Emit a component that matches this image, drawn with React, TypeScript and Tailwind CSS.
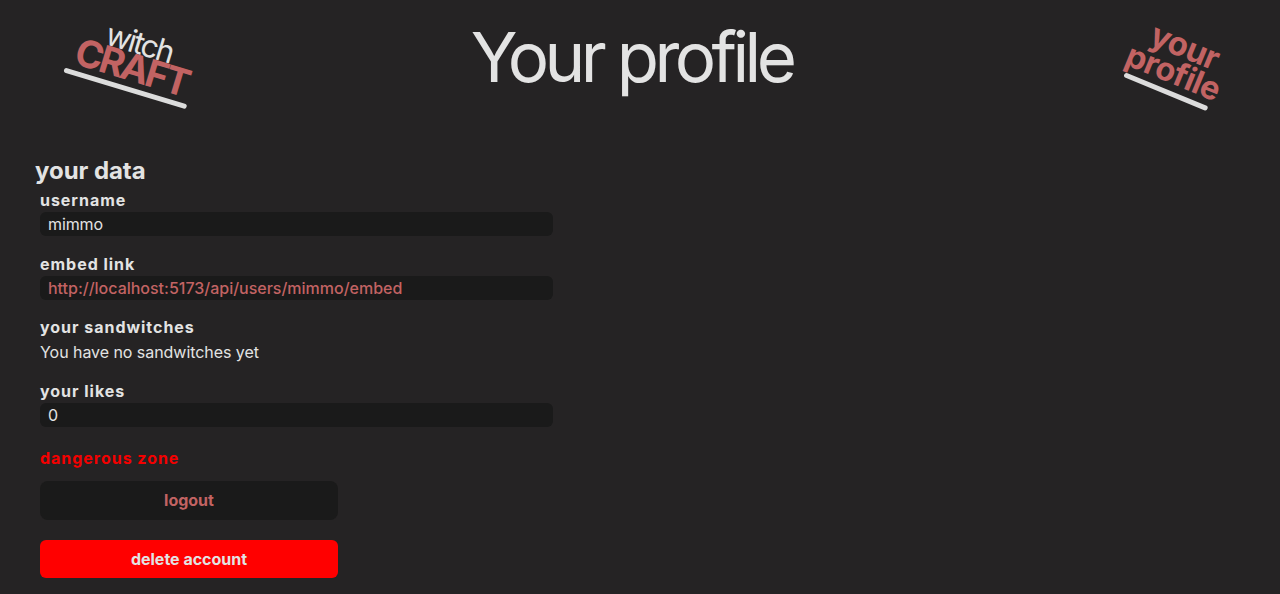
import type { ReactNode } from "react";

function Field({ label, children }: { label: string; children: ReactNode }) {
  return (
    <>
      <h3 className="h-6 text-[16px] leading-6 font-bold tracking-[0.97px]">{label}</h3>
      {children}
    </>
  );
}

export default function App() {
  return (
    <div className="min-h-[594px] overflow-hidden bg-[#252324] font-['Inter',sans-serif] text-[#e3e3e3]">
      <header className="grid h-[150px] grid-cols-[1fr_auto_1fr] items-start pt-[27px] pr-[52px] pl-[68px]">
        <a className="-mt-1 flex h-20 w-[130px] rotate-[16.8deg] flex-col items-center">
          <span className="h-[25px] pt-[3px] pl-[1px] text-[31px] leading-[32px] tracking-[-2.1px]">witch</span>
          <span className="h-[34px] text-[38px] leading-[38px] font-bold tracking-[-2.7px] text-[#c26363]">CRAFT</span>
          <span className="mt-[5px] h-[5px] w-[128px] rounded-full bg-[#dcdcdc]" />
        </a>
        <h1 className="-mt-[12px] -ml-[33px] text-[69px] leading-[84px] font-normal tracking-[-4.6px]">Your profile</h1>
        <a className="flex h-20 w-[105px] rotate-[22.4deg] flex-col items-center justify-self-end">
          <span className="h-[26px] pt-[2px] pl-[2px] text-[33px] leading-[30px] font-bold tracking-[-0.6px] text-[#c26363]">your</span>
          <span className="h-[34px] pt-[5px] text-[32.5px] leading-[30px] font-bold tracking-[-0.6px] text-[#c26363]">profile</span>
          <span className="mt-1 h-[5px] w-[90px] rounded-full bg-[#dcdcdc]" />
        </a>
      </header>
      <main className="px-10">
        <h2 className="-ml-[5px] pt-[3px] text-[24px] leading-[35px] font-bold tracking-[-0.05px]">your data</h2>
        <section className="w-[513px] text-[16px]">
          <Field label="username">
            <p className="mb-[15.6px] h-6 rounded-md bg-[#1a1a1a] px-2 leading-[24px] tracking-[-0.1px]">mimmo</p>
          </Field>
          <Field label="embed link">
            <p className="mb-[15.6px] h-6 rounded-md bg-[#1a1a1a] px-2 leading-6 font-medium tracking-[-0.01px] text-[#c26363]">http://localhost:5173/api/users/mimmo/embed</p>
          </Field>
          <Field label="your sandwitches">
            <p className="mb-[15.6px] h-6 pt-px leading-6 tracking-[-0.05px]">You have no sandwitches yet</p>
          </Field>
          <Field label="your likes">
            <p className="h-6 rounded-md bg-[#1a1a1a] px-2 leading-6">0</p>
          </Field>
        </section>
        <section className="mt-[19.2px] flex w-[298px] flex-col">
          <h3 className="h-[35px] text-[16px] leading-6 font-bold tracking-[0.97px] text-[#f40000]">dangerous zone</h3>
          <button className="h-[39px] rounded-lg bg-[#1a1a1a] text-[16px] font-bold text-[#c26363]">logout</button>
          <button className="mt-5 h-[38px] rounded-md bg-[#ff0000] text-[16px] font-bold">delete account</button>
        </section>
      </main>
    </div>
  );
}
